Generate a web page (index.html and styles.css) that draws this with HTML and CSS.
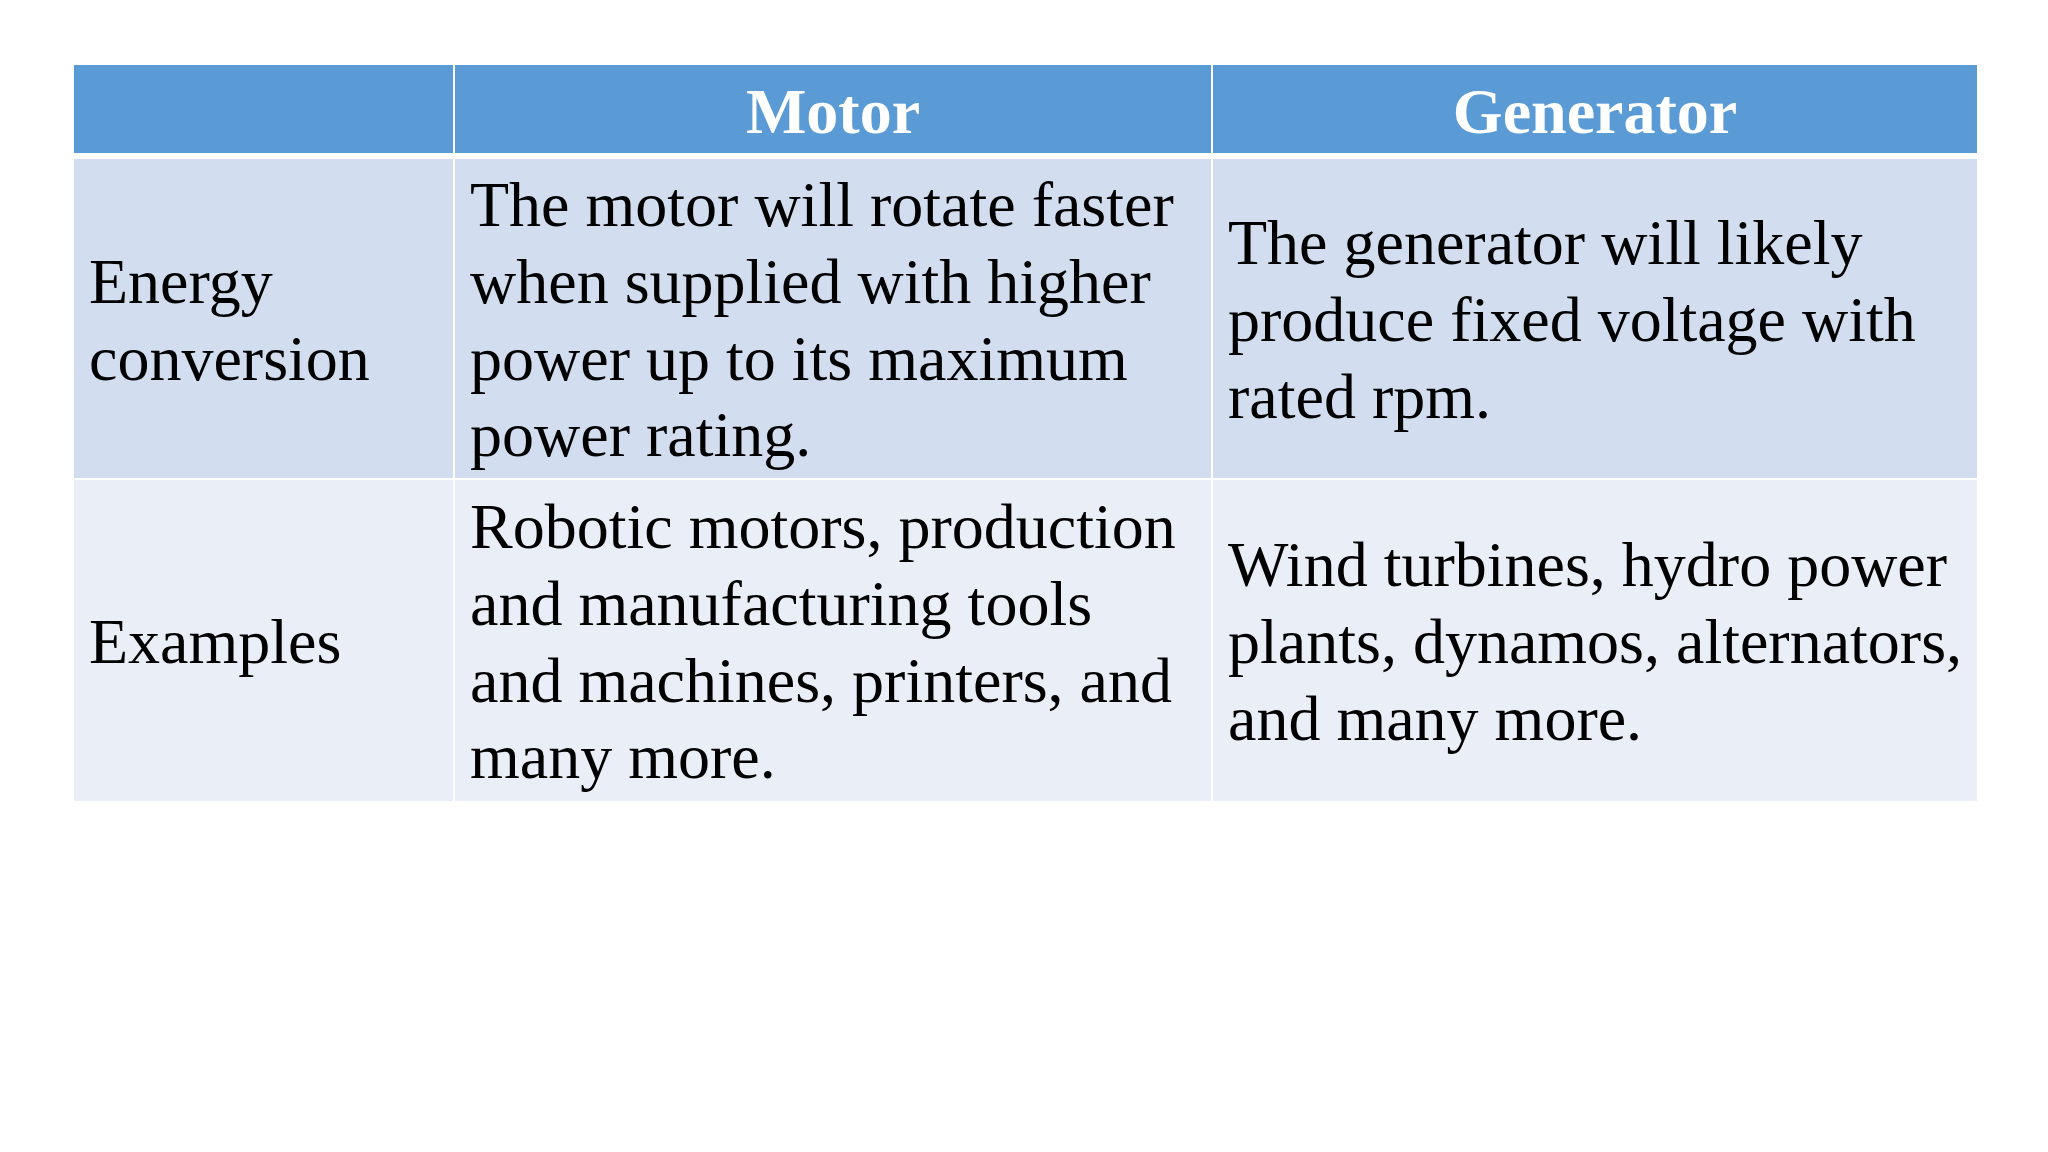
FILE: index.html
```html
<!DOCTYPE html>
<html lang="en">
<head>
<meta charset="utf-8">
<title>Motor vs Generator</title>
<link rel="stylesheet" href="styles.css">
</head>
<body>
<main class="slide">
  <div class="compare">
    <div class="cell head c1"></div>
    <div class="cell head c2">Motor</div>
    <div class="cell head c3">Generator</div>

    <div class="cell band1 c1">Energy conversion</div>
    <div class="cell band1 c2">The motor will rotate faster when supplied with higher power up to its maximum power rating.</div>
    <div class="cell band1 c3">The generator will likely produce fixed voltage with rated rpm.</div>

    <div class="cell band2 c1">Examples</div>
    <div class="cell band2 c2">Robotic motors, production and manufacturing tools and machines, printers, and many more.</div>
    <div class="cell band2 c3">Wind turbines, hydro power plants, dynamos, alternators, and many more.</div>
  </div>
</main>
</body>
</html>
```

FILE: styles.css
```css
html, body {
  margin: 0;
  padding: 0;
  background: #ffffff;
}

.slide {
  width: 2048px;
  height: 1152px;
  box-sizing: border-box;
  padding: 65px 0 0 74px;
  font-family: "Liberation Serif", "Times New Roman", serif;
}

.compare {
  width: 1903px;
  display: grid;
  grid-template-columns: 379px 756px 764px;
  grid-template-rows: 92px 319px 321px;
  gap: 2px;
}

.cell {
  box-sizing: border-box;
  display: flex;
  flex-direction: column;
  justify-content: center;
  padding: 8px 15px 4px 15px;
  font-size: 64px;
  line-height: 76.8px;
  color: #000000;
}

.cell.c3 {
  padding-right: 6px;
}

.head {
  background: #5b9bd5;
  color: #ffffff;
  font-weight: bold;
  text-align: center;
  justify-content: flex-start;
  padding: 9px 15px 2px 15px;
  margin-bottom: 4px;
}

.head.c3 {
  padding-right: 15px;
}

.band1 {
  background: #d2deef;
}

.band2 {
  background: #eaeff7;
}
```
